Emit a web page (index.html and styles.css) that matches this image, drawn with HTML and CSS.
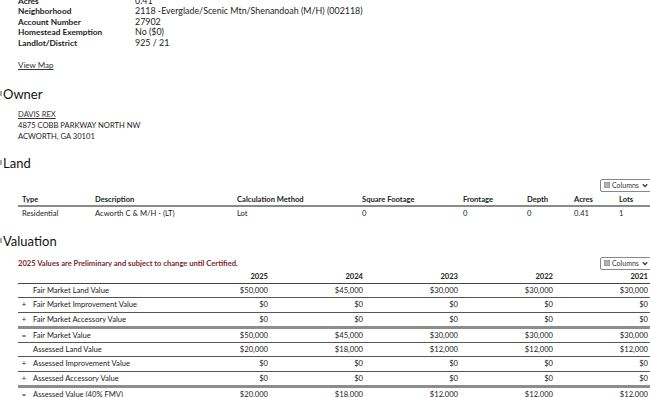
FILE: index.html
```html
<!DOCTYPE html>
<html>
<head>
<meta charset="utf-8">
<link rel="stylesheet" href="styles.css">
</head>
<body>
<div class="page">
  <div class="info">
    <div class="info-row"><span class="lbl">Acres</span><span class="val">0.41</span></div>
    <div class="info-row"><span class="lbl">Neighborhood</span><span class="val">2118 -Everglade/Scenic Mtn/Shenandoah (M/H) (002118)</span></div>
    <div class="info-row"><span class="lbl">Account Number</span><span class="val">27902</span></div>
    <div class="info-row"><span class="lbl">Homestead Exemption</span><span class="val">No ($0)</span></div>
    <div class="info-row"><span class="lbl">Landlot/District</span><span class="val">925 / 21</span></div>
  </div>
  <a class="link viewmap">View Map</a>

  <h2 class="sec owner-h"><span class="tog"></span>Owner</h2>
  <div class="owner">
    <a class="link">DAVIS REX</a>
    <div>4875 COBB PARKWAY NORTH NW</div>
    <div>ACWORTH, GA 30101</div>
  </div>

  <h2 class="sec land-h"><span class="tog"></span>Land</h2>
  <div class="toolbar land-tb">
    <span class="colbtn"><svg class="gridic" width="6" height="6" viewBox="0 0 6 6"><rect x="0" y="0" width="6" height="6" fill="#888"/><path d="M2 0V6M4 0V6M0 2H6M0 4H6" stroke="#ddd" stroke-width="0.6"/></svg>Columns<svg class="chev" width="6" height="5" viewBox="0 0 6 5"><path d="M0.8 1.2L3 3.6L5.2 1.2" fill="none" stroke="#333" stroke-width="1.3"/></svg></span>
  </div>
  <table class="land">
    <colgroup>
      <col style="width:73px"><col style="width:142px"><col style="width:125px"><col style="width:101px"><col style="width:64px"><col style="width:47px"><col style="width:45px"><col style="width:37px">
    </colgroup>
    <thead>
      <tr><th>Type</th><th>Description</th><th>Calculation Method</th><th>Square Footage</th><th>Frontage</th><th>Depth</th><th>Acres</th><th>Lots</th></tr>
    </thead>
    <tbody>
      <tr><td>Residential</td><td>Acworth C &amp; M/H - (LT)</td><td>Lot</td><td>0</td><td>0</td><td>0</td><td>0.41</td><td>1</td></tr>
    </tbody>
  </table>

  <h2 class="sec val-h"><span class="tog"></span>Valuation</h2>
  <div class="val-top">
    <div class="notice">2025 Values are Preliminary and subject to change until Certified.</div>
    <span class="colbtn"><svg class="gridic" width="6" height="6" viewBox="0 0 6 6"><rect x="0" y="0" width="6" height="6" fill="#888"/><path d="M2 0V6M4 0V6M0 2H6M0 4H6" stroke="#ddd" stroke-width="0.6"/></svg>Columns<svg class="chev" width="6" height="5" viewBox="0 0 6 5"><path d="M0.8 1.2L3 3.6L5.2 1.2" fill="none" stroke="#333" stroke-width="1.3"/></svg></span>
  </div>
  <table class="valtab">
    <colgroup>
      <col style="width:12px"><col style="width:147px"><col style="width:95px"><col style="width:95px"><col style="width:95px"><col style="width:95px"><col style="width:95px">
    </colgroup>
    <thead>
      <tr><th></th><th></th><th>2025</th><th>2024</th><th>2023</th><th>2022</th><th>2021</th></tr>
    </thead>
    <tbody>
      <tr><td class="sg"></td><td>Fair Market Land Value</td><td>$50,000</td><td>$45,000</td><td>$30,000</td><td>$30,000</td><td>$30,000</td></tr>
      <tr><td class="sg">+</td><td>Fair Market Improvement Value</td><td>$0</td><td>$0</td><td>$0</td><td>$0</td><td>$0</td></tr>
      <tr><td class="sg">+</td><td>Fair Market Accessory Value</td><td>$0</td><td>$0</td><td>$0</td><td>$0</td><td>$0</td></tr>
      <tr class="total"><td class="sg">=</td><td>Fair Market Value</td><td>$50,000</td><td>$45,000</td><td>$30,000</td><td>$30,000</td><td>$30,000</td></tr>
      <tr><td class="sg"></td><td>Assessed Land Value</td><td>$20,000</td><td>$18,000</td><td>$12,000</td><td>$12,000</td><td>$12,000</td></tr>
      <tr><td class="sg">+</td><td>Assessed Improvement Value</td><td>$0</td><td>$0</td><td>$0</td><td>$0</td><td>$0</td></tr>
      <tr><td class="sg">+</td><td>Assessed Accessory Value</td><td>$0</td><td>$0</td><td>$0</td><td>$0</td><td>$0</td></tr>
      <tr class="total"><td class="sg">=</td><td>Assessed Value (40% FMV)</td><td>$20,000</td><td>$18,000</td><td>$12,000</td><td>$12,000</td><td>$12,000</td></tr>
    </tbody>
  </table>
</div>
</body>
</html>
```

FILE: styles.css
```css
html, body {
  margin: 0;
  padding: 0;
  background: #fff;
  overflow: hidden;
}
body {
  font-family: Lato, "Liberation Sans", sans-serif;
  font-size: 7.6px;
  color: #222;
}
.page {
  width: 660px;
  margin-top: -4px;
}
.info {
  padding-left: 18px;
}
.info-row {
  display: flex;
  align-items: baseline;
  height: 10.4px;
  line-height: 10.4px;
}
.lbl {
  width: 117px;
  font-weight: bold;
  font-size: 8.3px;
}
.val {
  font-size: 8.9px;
}
.link {
  color: #333;
  text-decoration: underline;
}
.viewmap {
  display: block;
  margin: 12px 0 0 18px;
  line-height: 10px;
  font-size: 8px;
}
.sec {
  display: flex;
  align-items: center;
  margin: 0;
  font-size: 13px;
  font-weight: normal;
  line-height: 16px;
  color: #111;
}
.tog {
  display: inline-block;
  width: 2px;
  height: 5px;
  background: #aaa;
  margin-right: 1px;
}
.owner-h { margin-top: 16px; }
.owner {
  padding-left: 18px;
  margin-top: 7px;
  line-height: 11px;
}
.owner .link { display: block; }
.land-h { margin-top: 13px; }
.toolbar {
  display: flex;
  justify-content: flex-end;
  margin-top: 8px;
  padding-right: 8px;
}
.colbtn {
  display: inline-flex;
  align-items: center;
  gap: 2px;
  height: 11px;
  padding: 0 3px 0 3px;
  border: 1px solid #888;
  border-radius: 2px;
  font-size: 7px;
  color: #333;
  width: 44px;
  box-sizing: content-box;
}
.chev { margin-left: auto; }
table {
  border-collapse: collapse;
  table-layout: fixed;
  margin-left: 18px;
}
.land th, .land td {
  text-align: left;
  padding: 0 4px;
  white-space: nowrap;
  overflow: hidden;
}
.land th {
  font-weight: bold;
  height: 12px;
  line-height: 12px;
  border-bottom: 2px solid #8a8a8a;
}
.land td {
  height: 13px;
  line-height: 13px;
}
.land { margin-top: 1px; }
.val-h { margin-top: 13px; }
.val-top {
  display: flex;
  justify-content: space-between;
  align-items: center;
  margin-top: 8px;
  padding: 0 8px 0 18px;
}
.notice {
  color: #7a1f2e;
  font-weight: bold;
}
.valtab { margin-top: 0; }
.valtab th {
  font-weight: bold;
  text-align: right;
  padding: 0 4px;
  height: 13px;
  line-height: 13px;
  border-bottom: 1px solid #444;
}
.valtab td {
  text-align: right;
  padding: 0 4px;
  height: 13.3px;
  line-height: 13.3px;
  border-top: 1px solid #555;
  white-space: nowrap;
}
.valtab tbody tr:first-child td { border-top: none; }
.valtab td:nth-child(2) {
  text-align: left;
  padding-left: 3px;
}
.valtab td.sg {
  text-align: center;
  padding: 0;
}
.valtab tr.total td {
  border-top: 3px solid #8d8d8d;
}
```
